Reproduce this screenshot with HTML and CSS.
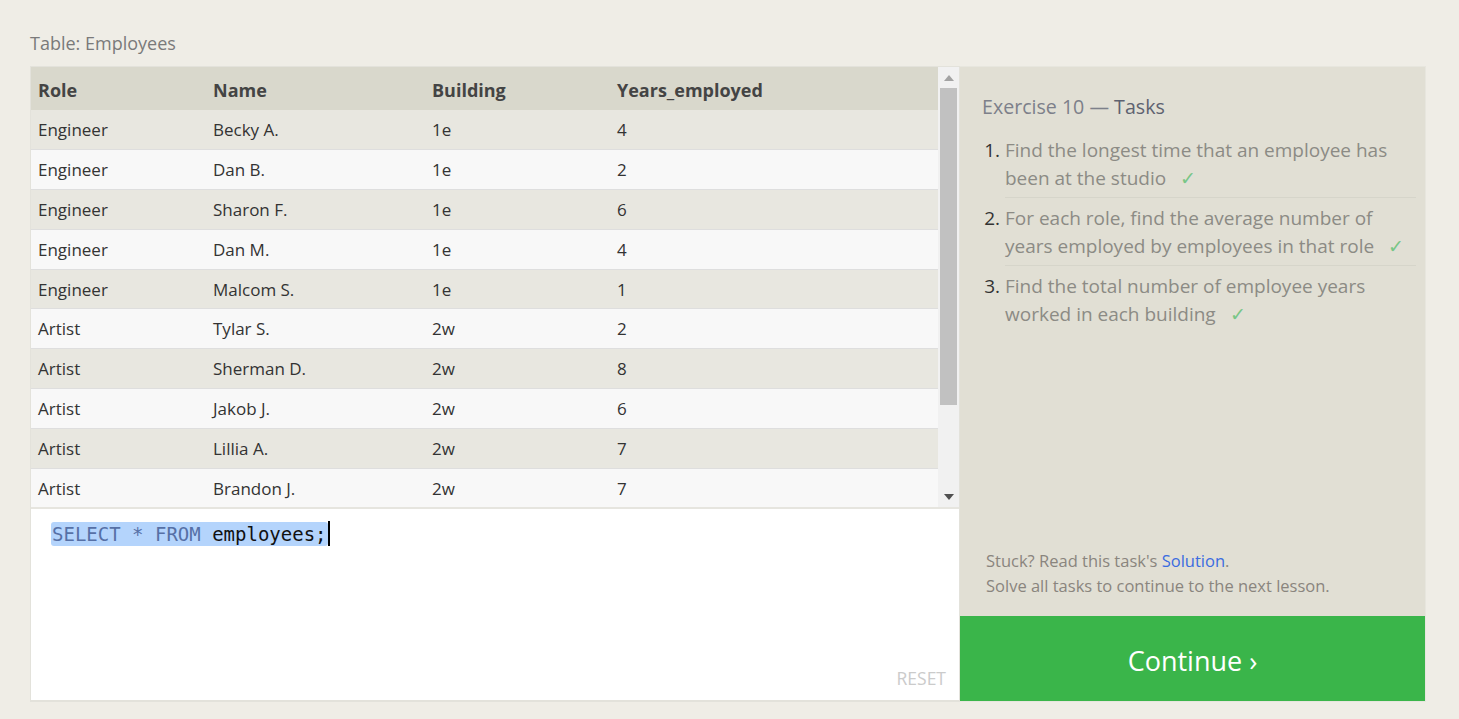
FILE: index.html
```html
<!DOCTYPE html>
<html>
<head>
<meta charset="utf-8">
<link rel="stylesheet" href="styles.css">
</head>
<body>
<div class="page">
  <div class="table-title">Table: Employees</div>
  <div class="main">
    <div class="left">
      <div class="table-box">
        <div class="table-scroll">
          <table class="data">
            <colgroup>
              <col class="c1"><col class="c2"><col class="c3"><col class="c4">
            </colgroup>
            <thead>
              <tr><th>Role</th><th>Name</th><th>Building</th><th>Years_employed</th></tr>
            </thead>
            <tbody>
              <tr><td>Engineer</td><td>Becky A.</td><td>1e</td><td>4</td></tr>
              <tr><td>Engineer</td><td>Dan B.</td><td>1e</td><td>2</td></tr>
              <tr><td>Engineer</td><td>Sharon F.</td><td>1e</td><td>6</td></tr>
              <tr><td>Engineer</td><td>Dan M.</td><td>1e</td><td>4</td></tr>
              <tr><td>Engineer</td><td>Malcom S.</td><td>1e</td><td>1</td></tr>
              <tr><td>Artist</td><td>Tylar S.</td><td>2w</td><td>2</td></tr>
              <tr><td>Artist</td><td>Sherman D.</td><td>2w</td><td>8</td></tr>
              <tr><td>Artist</td><td>Jakob J.</td><td>2w</td><td>6</td></tr>
              <tr><td>Artist</td><td>Lillia A.</td><td>2w</td><td>7</td></tr>
              <tr><td>Artist</td><td>Brandon J.</td><td>2w</td><td>7</td></tr>
              <tr><td>Manager</td><td>Scott K.</td><td>1e</td><td>9</td></tr>
              <tr><td>Manager</td><td>Shirlee M.</td><td>1e</td><td>3</td></tr>
              <tr><td>Manager</td><td>Daria O.</td><td>2w</td><td>6</td></tr>
            </tbody>
          </table>
        </div>
        <div class="scrollbar">
          <div class="sb-btn"><svg width="10" height="6" viewBox="0 0 10 6"><polygon points="0,6 10,6 5,0" fill="#a3a3a3"/></svg></div>
          <div class="sb-track"><div class="sb-thumb"></div></div>
          <div class="sb-btn"><svg width="10" height="6" viewBox="0 0 10 6"><polygon points="0,0 10,0 5,6" fill="#505050"/></svg></div>
        </div>
      </div>
      <div class="editor">
        <div class="code"><span class="sel"><span class="kw">SELECT * FROM</span> employees;</span><span class="caret"></span></div>
        <div class="editor-foot"><span class="reset">RESET</span></div>
      </div>
    </div>
    <div class="right">
      <div class="tasks">
        <h3 class="tasks-title">Exercise 10 — <span class="tasks-strong">Tasks</span></h3>
        <ol class="task-list">
          <li class="task">Find the longest time that an employee has been at the studio <span class="check">✓</span></li>
          <li class="task">For each role, find the average number of years employed by employees in that role <span class="check">✓</span></li>
          <li class="task">Find the total number of employee years worked in each building <span class="check">✓</span></li>
        </ol>
      </div>
      <div class="help">
        <p>Stuck? Read this task's <a class="link" href="#">Solution</a>.</p>
        <p>Solve all tasks to continue to the next lesson.</p>
      </div>
      <div class="continue">Continue ›</div>
    </div>
  </div>
</div>
</body>
</html>
```

FILE: styles.css
```css
* { box-sizing: border-box; }
html, body {
  margin: 0;
  padding: 0;
  background: #efede6;
  font-family: "Open Sans", "Noto Sans", sans-serif;
}
.page {
  padding: 30px 33px 17px 30px;
}
.table-title {
  font-size: 18px;
  color: #7a7a7a;
  line-height: 26px;
  margin-bottom: 10px;
}
.main {
  display: flex;
  height: 636px;
}
.left {
  width: 930px;
  display: flex;
  flex-direction: column;
  border: 1px solid #e3e2db;
  border-bottom-width: 2px;
  background: #fff;
}
.table-box {
  height: 442px;
  display: flex;
  border-bottom: 2px solid #e6e5df;
}
.table-scroll {
  flex: 1;
  overflow: hidden;
  background: #f8f8f8;
}
.scrollbar {
  width: 21px;
  display: flex;
  flex-direction: column;
  background: #f1f1f1;
}
.sb-btn {
  height: 21px;
  display: flex;
  align-items: center;
  justify-content: center;
}
.sb-track {
  flex: 1;
  padding: 0 2px;
}
.sb-thumb {
  height: 317px;
  background: #c1c1c1;
}
.data {
  width: 100%;
  border-collapse: collapse;
  font-size: 17px;
  color: #333;
}
.c1 { width: 175px; }
.c2 { width: 219px; }
.c3 { width: 185px; }
.data th {
  background: #d9d8cc;
  text-align: left;
  font-weight: 700;
  color: #444;
  height: 43px;
  padding: 3px 7px 0 7px;
  font-size: 18px;
}
.data td {
  height: 39.8px;
  padding: 0 7px;
  border-bottom: 1px solid #dedede;
}
.data tbody tr:nth-child(odd) td { background: #e8e7e0; }
.data tbody tr:nth-child(even) td { background: #f8f8f8; }
.editor {
  flex: 1;
  display: flex;
  flex-direction: column;
  background: #fff;
}
.code {
  flex: 1;
  padding: 13px 0 0 20px;
  font-family: "DejaVu Sans Mono", "Liberation Mono", monospace;
  font-size: 19px;
  line-height: 24px;
  display: flex;
  align-items: flex-start;
}
.sel {
  background: #b4d4fc;
  border-radius: 3px;
  color: #111;
  padding: 0 1px;
  white-space: pre;
}
.kw { color: #5670a6; }
.caret {
  width: 2px;
  height: 25px;
  margin-top: -1px;
  background: #000;
}
.editor-foot {
  display: flex;
  justify-content: flex-end;
  padding: 0 13px 10px 0;
}
.reset {
  font-size: 17.5px;
  color: #cbcbcb;
}
.right {
  width: 466px;
  display: flex;
  flex-direction: column;
  background: #e1dfd4;
  border: 1px solid #e7e6de;
  border-left: 0;
}
.tasks {
  flex: 1;
  padding: 27px 9px 0 22px;
}
.tasks-title {
  margin: 0 0 16px 0;
  font-weight: 400;
  font-size: 19.6px;
  line-height: 26px;
  color: #7d808a;
}
.tasks-strong { color: #5e6270; }
.task-list {
  margin: 0;
  padding: 0 0 0 23px;
}
.task {
  font-size: 19px;
  line-height: 28px;
  color: #8c8b85;
  padding: 0 0 5px 0;
  margin-bottom: 6px;
  border-bottom: 1px solid #d6d5ca;
}
.task:last-child { border-bottom: 0; }
.task::marker { color: #333; }
.check {
  color: #78c686;
  margin-left: 9px;
}
.help {
  padding: 0 26px 18px 26px;
  font-size: 16.5px;
  line-height: 25px;
  color: #8a857e;
}
.help p { margin: 0; }
.link { color: #3b6ce0; text-decoration: none; }
.continue {
  height: 85px;
  background: #3ab54a;
  color: #fff;
  font-size: 27px;
  padding-top: 3px;
  display: flex;
  align-items: center;
  justify-content: center;
}
```
